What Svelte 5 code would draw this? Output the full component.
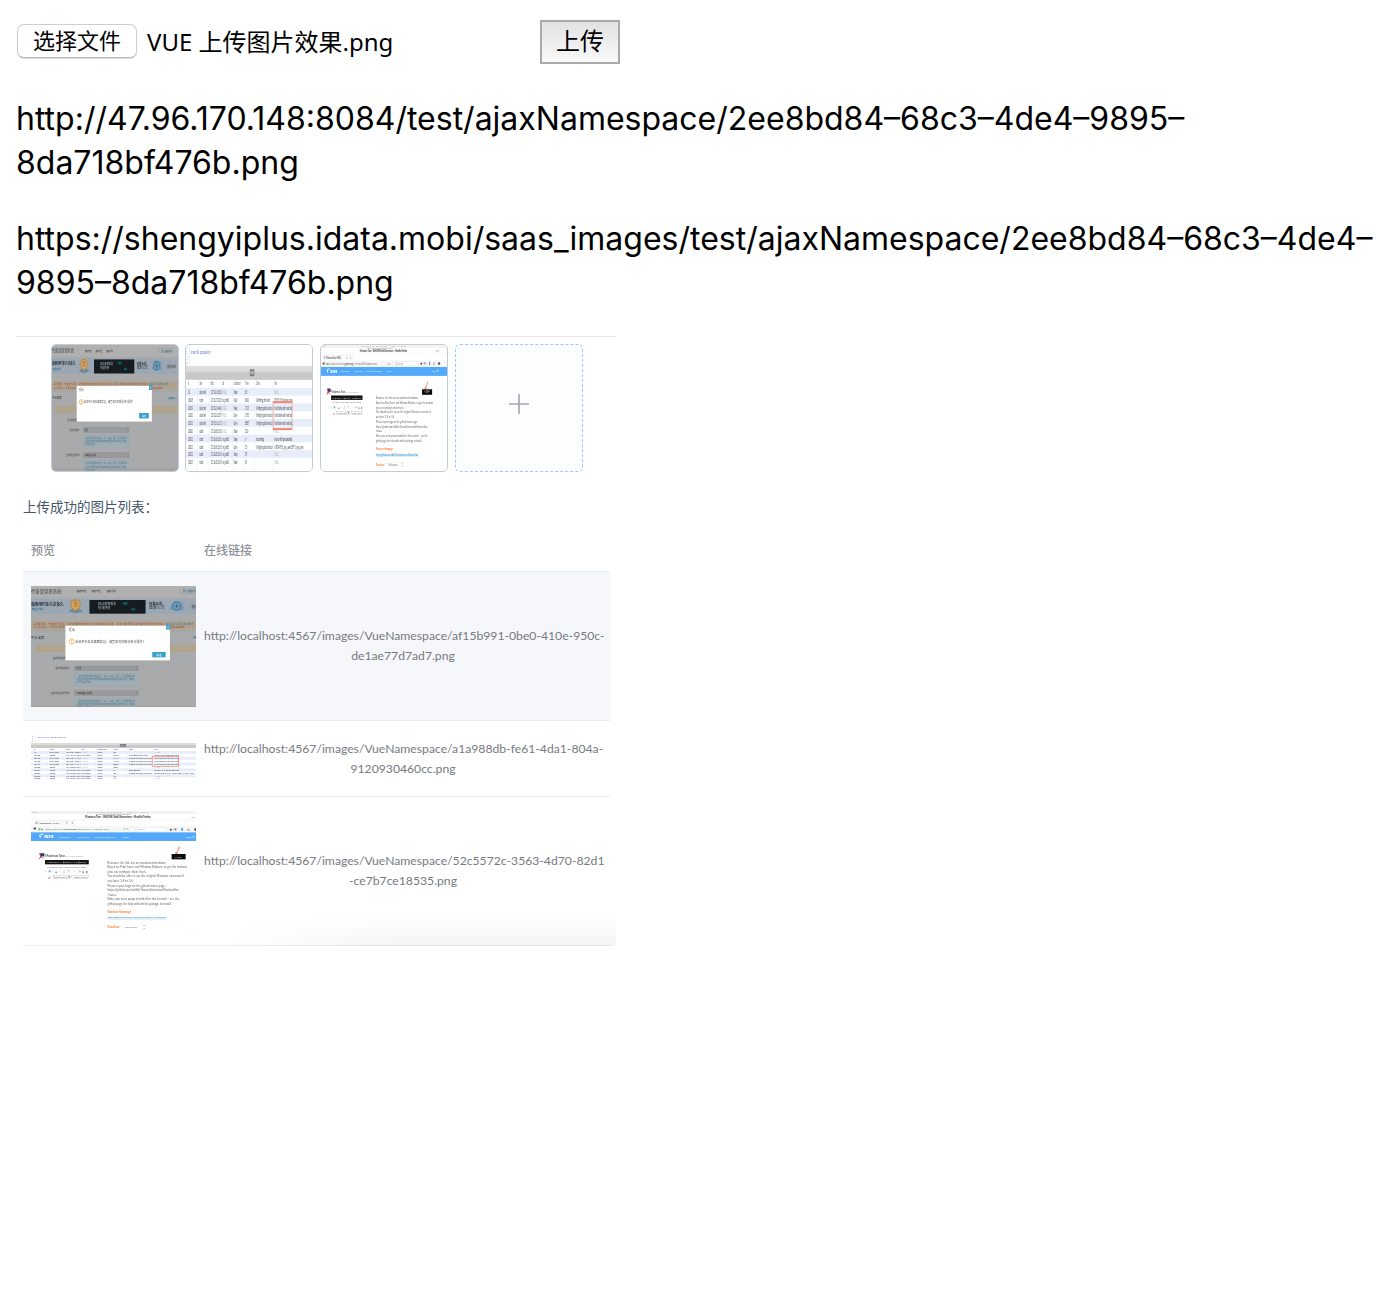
<script>
  const urls = [
    ['http://47.96.170.148:8084/test/ajaxNamespace/2ee8bd84–68c3–4de4–9895–', '8da718bf476b.png'],
    ['https://shengyiplus.idata.mobi/saas_images/test/ajaxNamespace/2ee8bd84–68c3–4de4–', '9895–8da718bf476b.png']
  ];

  const logRows = [
    ['10', 'daiyu test', '127.0.0.1:3336', '', 'Sleep', '80', '', ''],
    ['10108', 'root', '172.16.27.120:3', 'mq_test01', 'Daily', '86013', 'Writing to net', 'SELECT c.ID,c.language,c.name'],
    ['10109', 'daiyu test', '127.0.0.1:4436', '', 'Sleep', '27171', 'Waiting for global read lock', 'flush tables with read lock'],
    ['10130', 'daiyu test', '127.0.0.1:3377', '', 'Query', '15715', 'Waiting for global read lock', 'flush tables with read lock'],
    ['10131', 'daiyu test', '127.0.0.1:1171', '', 'Query', '8887', 'Waiting for global read lock', 'flush tables with read lock'],
    ['10200', 'root', '172.16.80.156:5', '', 'Sleep', '300', '', ''],
    ['10201', 'root', '172.16.86.156:5', 'mq_test01', 'Sleep', '0', 'starting', 'show full processlist'],
    ['10202', 'root', '172.16.80.156:5', 'mq_test01', 'Query', '33', 'Waiting for global read lock', 'UPDATE t_sys_user SET t_sys_user'],
    ['10203', 'root', '172.16.80.156:5', 'mq_test01', 'Sleep', '39', '', ''],
    ['10205', 'root', '172.16.80.156:5', 'mq_test01', 'Sleep', '34', '', '']
  ];
  const logX = [43, 91, 138, 187, 234, 282, 328, 404];
  const logW = [20, 27, 46, 28, 15, 16, 68, 74];

  const notes = [
    ['Removes the title bar on maximized windows.', 176],
    ['Based on Pixel Saver and Window Buttons; to get the buttons', 238],
    ['(you can configure them then).', 116],
    ['You should be able to use the original Maximus extension if', 230],
    ['you have 3.8 or 3.6', 76],
    ['Please report bugs on the github issues page:', 174],
    ['https://github.com/sidkik/GnomeExtensionMaximusTwo', 214],
    ['/issues', 26],
    ['Note: you need xprop installed for this to work – see the', 215],
    ['github page for help with which package to install.', 192]
  ];

  const rows = [
    { kind: 'admin', size: 'tall', lines: ['http://localhost:4567/images/VueNamespace/af15b991-0be0-410e-950c-', 'de1ae77d7ad7.png'] },
    { kind: 'log', size: 'short', lines: ['http://localhost:4567/images/VueNamespace/a1a988db-fe61-4da1-804a-', '9120930460cc.png'] },
    { kind: 'gnome', size: 'tall', lines: ['http://localhost:4567/images/VueNamespace/52c5572c-3563-4d70-82d1', '-ce7b7ce18535.png'] }
  ];
</script>

{#snippet admin(box)}
  <svg class="scene" viewBox={box} preserveAspectRatio="none" aria-hidden="true">
    <rect x="35" y="24" width="530" height="370" fill="#a9aaab" />
    <rect x="35" y="24" width="530" height="34" fill="#b0b0b0" />
    <text x="35" y="45" font-size="13" textLength="91" fill="#43474b">代备案管理系统</text>
    <g font-size="8" fill="#4a4c50">
      <text x="171" y="43" textLength="29">备案管理</text>
      <text x="216" y="43" textLength="29">备案专区</text>
      <text x="261" y="43" textLength="29">备案帮助</text>
    </g>
    <rect x="482" y="34" width="54" height="12" rx="2" fill="none" stroke="#648fa5" />
    <text x="489" y="43" font-size="8" fill="#37637b">登入备案系统</text>
    <rect x="35" y="63" width="530" height="45" fill="#9ba8b3" />
    <text x="35" y="83" font-size="12" font-weight="700" textLength="98" fill="#34404d">备案用时多久这多久</text>
    <text x="38" y="97" font-size="8" fill="#2a6890">查看详情 ›</text>
    <path d="M146 100l22-12 24 12-22 6z" fill="#6589a5" />
    <path d="M155 70l13-5 14 5v13q-2 10-14 15q-12-5-13-15z" fill="#c2a77f" stroke="#c68430" stroke-width="3" />
    <rect x="163" y="77" width="12" height="10" rx="2" fill="#d78924" />
    <path d="M165 77v-4q4-5 7 0v4" fill="none" stroke="#945615" stroke-width="2" />
    <rect x="210" y="66" width="168" height="41" fill="#171c20" />
    <text x="236" y="82" font-size="9" fill="#a9b3b7">网站备案服务</text>
    <text x="236" y="94" font-size="9" fill="#a9b3b7">快速便捷</text>
    <path d="M306 76l12-5 10 5-10 6zM333 94l9-5 8 5-9 5z" fill="#0c5a63" />
    <text x="388" y="81" font-size="10" font-weight="700" fill="#303c46">阿里云幕</text>
    <text x="388" y="94" font-size="12" fill="#303c46">备案公告</text>
    <path d="M449 93l15-25 24 5 5 22-21 5z" fill="#7697b1" />
    <circle cx="471" cy="84" r="12" fill="none" stroke="#377fa8" stroke-width="3" />
    <path d="M466 84h11M471 78v12" stroke="#275f8a" stroke-width="2" />
    <rect x="510" y="80" width="24" height="14" rx="4" fill="#969ea5" />
    <text x="516" y="90" font-size="9" fill="#414850">操作帮助</text>
    <rect x="35" y="130" width="530" height="24" fill="#b1a28f" />
    <g font-size="7" fill="#9a5036">
      <text x="42" y="141" textLength="395">●重要提醒：自本年六月起，工信部要求备案主体必须完成实名核验，请及时完成网站资料更新和服务信息确认</text>
      <text x="42" y="151" textLength="395">●平台提示：请用户核对域名实名信息并关注备案审核通知，若信息有误请尽快联系备案服务人员处理</text>
    </g>
    <text x="439" y="142" font-size="7" textLength="82" fill="#387b99">查看相关说明及实名要求</text>
    <text x="439" y="151" font-size="7" fill="#9a5036">确保资料真实有效</text>
    <path d="M35 158H565" stroke="#92918e" />
    <text x="35" y="182" font-size="10" fill="#34373b">平台备案</text>
    <text x="519" y="181" font-size="8" fill="#257296">●备案中心</text>
    <rect x="50" y="203" width="530" height="18" fill="#b1a58e" stroke="#b39865" />
    <g font-size="8" fill="#484b4e">
      <text x="98" y="244" textLength="48">* 主办单位性质：</text>
      <text x="105" y="274" textLength="50">* 主办单位证件：</text>
      <text x="91" y="347" textLength="65">* 主办单位证件号码：</text>
    </g>
    {#each [264, 338] as y}
      <rect x="166" y={y} width="190" height="14" fill="#989a9d" stroke="#858789" />
      <text x="170" y={y + 10} font-size="8" fill="#393b3d">{y === 264 ? '单位' : '工商营业执照'}</text>
      <path d={`M349 ${y + 5}l2-2 2 2M349 ${y + 9}l2 2 2-2`} fill="none" stroke="#444" />
      <rect x="166" y={y + 23} width="190" height="37" fill="#a0adb3" stroke="#86a5b3" />
      <g font-size="7" fill="#4f7a90">
        <text x="171" y={y + 34} textLength="176">1.主办单位性质请选择企业、法人、事业、部门、居民委员会等</text>
        <text x="171" y={y + 43} textLength="176">2.若主体为国内单位请提供真实有效的证件资料并核对名称，完成后</text>
        <text x="171" y={y + 52}>即可继续办理。</text>
      </g>
    {/each}
    <path d="M35 386H565" stroke="#a38f85" stroke-width="2" />
    <rect x="138" y="143" width="313" height="104" fill="#fff" />
    <rect x="439" y="141" width="13" height="14" fill="#46a1c7" />
    <path d="M443 145l5 6m0-6l-5 6" stroke="#fff" />
    <text x="149" y="159" font-size="9" fill="#333">提示</text>
    <path d="M138 165H451" stroke="#f2f2f2" />
    <circle cx="157" cy="190" r="7.5" fill="none" stroke="#f39b32" stroke-width="2" />
    <path d="M157 185v6m0 2v2" stroke="#ee8c24" stroke-width="2" />
    <text x="168" y="194" font-size="9" textLength="210" fill="#4b4b4b">此证件已存在备案信息，请登录对应账号进行操作！</text>
    <rect x="398" y="222" width="40" height="16" fill="#35a1cc" />
    <text x="411" y="233" font-size="8" fill="#fff">确定</text>
  </svg>
{/snippet}

{#snippet log(box)}
  <svg class="scene" viewBox={box} preserveAspectRatio="none" aria-hidden="true">
    <rect x="35" y="51" width="530" height="143" fill="#fff" />
    <g font-size="6" fill="#888">
      <text x="37" y="56">1</text><text x="37" y="62">2</text><text x="37" y="68">3</text><text x="37" y="73">4</text>
    </g>
    <path d="M50 51V73" stroke="#ddd" />
    <text x="55" y="61" font-size="7" textLength="83" fill="#3c50c2">show full processlist;</text>
    <rect x="35" y="75" width="530" height="15" fill="#c9c9c9" />
    <rect x="35" y="75" width="530" height="6" fill="#dcdcdc" />
    <rect x="301" y="78" width="19" height="8" rx="2" fill="#777" />
    <path d="M305 80v4m4-4v4m4-4v4m3-4v4" stroke="#ddd" />
    {#each ['Id', 'User', 'Host', 'db', 'Command', 'Time', 'State', 'Info'] as h, i}
      <text x={logX[i]} y="96" font-size="6" fill="#555">{h}</text>
    {/each}
    {#each logRows as row, r}
      {#if r % 2 === 0}
        <rect x="35" y={99 + r * 8.7} width="530" height="8.7" fill="#e7edf9" />
      {/if}
      {#each row as cell, i}
        {#if cell}
          <text x={logX[i]} y={106 + r * 8.7} font-size="7" textLength={r === 7 && i === 7 ? 120 : Math.min(logW[i], cell.length * 4)} lengthAdjust="spacingAndGlyphs" fill="#3b3f48">{cell}</text>
        {:else if i === 3 || i === 7}
          <text x={logX[i]} y={106 + r * 8.7} font-size="6" fill="#aaa">(NULL)</text>
        {/if}
      {/each}
    {/each}
    <path d="M83 91V192M131 91V192M181 91V192M228 91V192M277 91V192M322 91V192M398 91V192" stroke="#e1e5ee" stroke-width=".7" />
    <rect x="398" y="115" width="79" height="30" fill="none" stroke="#f18b7c" stroke-width="2.5" />
  </svg>
{/snippet}

{#snippet gnome(box)}
  <svg class="scene" viewBox={box} preserveAspectRatio="none" aria-hidden="true">
    <rect x="35" y="36" width="530" height="370" fill="#fff" />
    <rect x="35" y="36" width="530" height="9" fill="#f3f3f3" />
    <text x="38" y="43" font-size="7" fill="#bbb">● ● ●</text>
    <text x="202" y="43" font-size="7" textLength="185" fill="#999">GNOME Shell Extensions - Mozilla Firefox</text>
    <path d="M228 46H334" stroke="#aaa" stroke-width="2" />
    <text x="197" y="57" font-size="8" font-weight="700" textLength="196" fill="#333">Maximus Two - GNOME Shell Extensions - Mozilla Firefox</text>
    <text x="511" y="57" font-size="8" fill="#555">-  □  ×</text>
    <path d="M35 63H565M35 82H565" stroke="#e5e5e5" />
    <path d="M46 79V66H166V79" fill="#fafafa" stroke="#ddd" />
    <path d="M50 69v7m0-7l4 2-4 3" stroke="#334" fill="none" />
    <text x="57" y="76" font-size="8" textLength="64" fill="#444">Maximus Two - GNO...</text>
    <text x="140" y="76" font-size="9" fill="#555">×</text><text x="156" y="76" font-size="9" fill="#555">+</text>
    <rect x="35" y="83" width="530" height="17" fill="#f6f6f6" />
    <text x="40" y="94" font-size="10" fill="#444">◀</text>
    <path d="M58 94v-6h5v6zm8 0v-5h5v5z" fill="#68ad54" />
    <text x="76" y="94" font-size="8" textLength="194" fill="#898989">https://extensions.<tspan fill="#333">gnome.org</tspan>/extension/844/maximus-two/</text>
    <rect x="334" y="85" width="102" height="12" fill="#fff" stroke="#ddd" />
    <text x="343" y="94" font-size="8" fill="#999">Q, Search</text>
    <text x="311" y="94" font-size="9" fill="#888">□ ↻</text>
    <g font-size="11" fill="#555"><text x="448" y="95">★</text><text x="462" y="95">▣</text><text x="482" y="95" fill="#268dff">⬇</text><text x="502" y="95">⌂</text><text x="522" y="95">◆</text></g>
    <rect x="35" y="100" width="530" height="26" fill="#52a9fa" />
    <path d="M60 109q0-4 4-3v11q-5-1-4-8zm5-3q4-4 7-1q-1 4-5 3z" fill="#fff" />
    <text x="74" y="117" font-size="11" font-weight="700" textLength="29" fill="#fff">GNOME</text>
    <g font-size="7" fill="#e2f1ff"><text x="119" y="116" textLength="35">Extensions</text><text x="175" y="116" textLength="32">Add yours</text><text x="226" y="116" textLength="63">Installed extensions</text><text x="309" y="116">About</text><text x="498" y="116">Log in ▼</text></g>
    <path d="M60 163h15v10l-6-1-9 8 4-10z" fill="#363670" /><path d="M60 166l12 13m-5-7l-8 8" stroke="#df3440" stroke-width="2.5" />
    <text x="77" y="175" font-size="11" textLength="59" fill="#333">Maximus Two</text>
    <text x="140" y="175" font-size="7" textLength="52" fill="#aaa">by danielkoester</text>
    <rect x="77" y="183" width="131" height="13" fill="#141414" />
    <path d="M133 183v13m46-13v13" stroke="#777" />
    <text x="83" y="192" font-size="7" textLength="117" fill="#ddd">Activities  ◖ gedit(x)  ▾  Untitled</text>
    <text x="83" y="206" font-size="7" textLength="118" fill="#666">File Edit View Insert Format Table</text>
    <g font-size="10" fill="#626b78"><text x="77" y="222">▫</text><text x="86" y="222" fill="#218bc1">▣</text><text x="99" y="222">·</text><text x="106" y="222">▰</text><text x="120" y="222">·</text><text x="128" y="222">⇩</text><text x="142" y="222">▤</text><text x="164" y="222">·</text><text x="176" y="222">✂</text><text x="188" y="222">◈</text><text x="201" y="222">▮</text><text x="85" y="239">⚙</text></g>
    <rect x="101" y="230" width="55" height="9" fill="none" stroke="#aaa" /><text x="104" y="238" font-size="7" fill="#666">Default Style ▼</text>
    <rect x="162" y="230" width="45" height="9" fill="none" stroke="#aaa" /><text x="165" y="238" font-size="7" fill="#666">Times New R</text>
    <path d="M480 143l-11 23m0-7v8l6-4" fill="none" stroke="#ff5844" stroke-width="2.5" />
    <rect x="456" y="165" width="42" height="16" fill="#0b0b0b" /><text x="465" y="176" font-size="8" fill="#ddd">×  OFF</text>
    {#each notes as note, i}
      <text x="264" y={194 + i * 13.8} font-size="8.5" textLength={note[1]} fill="#656565">{note[0]}</text>
    {/each}
    <text x="264" y="342" font-size="8" font-weight="700" textLength="70" fill="#ff843c">Extension Homepage</text>
    <text x="264" y="358" font-size="8" textLength="176" fill="#2a8ac6">https://github.com/sidkik/GnomeExtensionMaximusTwo</text>
    <path d="M264 360H440" stroke="#58a8d4" />
    <text x="264" y="387" font-size="8" font-weight="700" textLength="35" fill="#ff843c">Download</text>
    <text x="315" y="387" font-size="8" textLength="41" fill="#888">Shell version...</text>
    <path d="M371 381l3-3 3 3m-6 6l3 3 3-3" fill="none" stroke="#555" />
    <path d="M505 398H565" stroke="#e6e6e6" />
  </svg>
{/snippet}

<main>
  <div class="toolbar">
    <button class="choose">选择文件</button>
    <span class="filename">VUE 上传图片效果.png</span>
    <button class="upload">上传</button>
  </div>

  {#each urls as url, i}
    <p class="url">
      <span class={`lead lead${i}`}>{url[0]}</span><span class={`tail tail${i}`}>{url[1]}</span>
    </p>
  {/each}

  <section class="preview">
    <div class="cards">
      <div class="card">{@render admin('35 24 525 367')}</div>
      <div class="card">{@render log('35 51 525 141')}</div>
      <div class="card">{@render gnome('35 36 525 367')}</div>
      <div class="card add">
        <svg width="20" height="20" viewBox="0 0 20 20" aria-hidden="true"><path d="M0 10H20M10 0V20" stroke="#a4a9b2" stroke-width="1.7" /></svg>
      </div>
    </div>
    <h2>上传成功的图片列表：</h2>
    <div class="table">
      <div class="row head"><span>预览</span><span>在线链接</span></div>
      {#each rows as row}
        <div class={`row ${row.size} ${row.kind}`}>
          <div class="thumb">
            {#if row.kind === 'admin'}{@render admin('35 24 494 363')}
            {:else if row.kind === 'log'}{@render log('35 51 494 141')}
            {:else}{@render gnome('35 36 494 363')}{/if}
          </div>
          <div class="link"><span>{row.lines[0]}</span><span>{row.lines[1]}</span></div>
        </div>
      {/each}
    </div>
    <div class="shade"></div>
  </section>
</main>

<style>
  :global(body) { background: #fff; }
  main {
    box-sizing: border-box;
    width: 1392px;
    height: 1314px;
    padding: 20px 16px;
    overflow: hidden;
    color: #000;
    font-family: Inter, "Noto Sans CJK SC", sans-serif;
  }
  button { margin: 0; color: #000; font-family: inherit; white-space: nowrap; }
  .toolbar { display: flex; height: 44px; align-items: center; }
  .choose {
    box-sizing: border-box;
    width: 120px;
    height: 34px;
    margin: 0 10px 2px 1px;
    padding: 0;
    border: 1px solid #cfcfcf;
    border-bottom-color: #b8b8b8;
    border-radius: 7px;
    background: #fff;
    box-shadow: 0 1px 1px #ddd;
    font-size: 22px;
    line-height: 32px;
  }
  .filename { width: 393px; font-family: "Noto Sans", "Noto Sans CJK SC", sans-serif; font-size: 24px; line-height: 44px; white-space: nowrap; }
  .upload {
    box-sizing: border-box;
    width: 80px;
    height: 44px;
    padding: 0;
    border: 2px solid #aaa;
    background: linear-gradient(#e2e2e2, #f9f9f9);
    font-size: 24px;
    line-height: 38px;
  }
  .url { margin: 33px 0 32px; font-size: 32px; line-height: 44px; }
  .url + .url { margin-top: 0; margin-bottom: 31px; }
  .url span { display: block; width: max-content; white-space: nowrap; }
  .preview {
    position: relative;
    box-sizing: border-box;
    width: 600px;
    height: 610px;
    padding: 7px 6px 0 7px;
    border-top: 1px solid #e6e6e6;
  }
  .cards { display: flex; gap: 6.7px; padding-left: 27.5px; }
  .card {
    box-sizing: border-box;
    width: 128px;
    height: 128px;
    border: 1px solid #c0ccda;
    border-radius: 5px;
    overflow: hidden;
    flex: none;
  }
  .add { display: grid; place-items: center; padding-bottom: 8px; border: 1.4px dashed #9bc8ff; background: #fbfdff; }
  .scene { display: block; width: 100%; height: 100%; font-family: Lato, "Noto Sans CJK SC", sans-serif; filter: blur(.25px); }
  h2 { height: 20px; margin: 25px 0 0; color: #475669; font-size: 13.5px; font-weight: 400; line-height: 20px; }
  .table { margin-top: 13px; }
  .row { box-sizing: border-box; display: grid; grid-template-columns: 165px 398px; column-gap: 8px; padding: 0 8px; align-items: center; border-bottom: 1px solid #ebedf4; }
  .head { height: 42px; color: #909399; font-size: 12px; font-weight: 500; line-height: 20px; }
  .tall { height: 149px; }
  .short { height: 76px; }
  .admin { background: #f5f7fb; }
  .thumb { width: 165px; height: 121px; overflow: hidden; }
  .short .thumb { height: 47px; }
  .link { color: #777a80; font-family: Lato, sans-serif; font-size: 12.2px; line-height: 20px; text-align: center; }
  .link span { display: block; white-space: nowrap; }
  .shade { position: absolute; right: 0; bottom: 0; width: 390px; height: 30px; background: linear-gradient(to bottom, transparent, rgba(0, 0, 0, .045)); mask-image: linear-gradient(to right, transparent, #000 45%); }
</style>
